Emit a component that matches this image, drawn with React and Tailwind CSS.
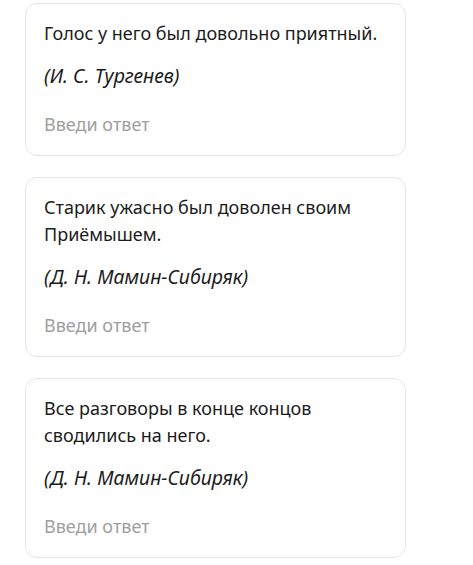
const tasks = [
  { text: "Голос у него был довольно приятный.", author: "(И. С. Тургенев)" },
  { text: "Старик ужасно был доволен своим Приёмышем.", author: "(Д. Н. Мамин-Сибиряк)" },
  { text: "Все разговоры в конце концов сводились на него.", author: "(Д. Н. Мамин-Сибиряк)" },
];

export default function App() {
  return (
    <div
      className="min-h-[565px] bg-white pl-[25px] pt-[3px] flex flex-col gap-[21px]"
      style={{ fontFamily: '"Noto Sans", "Open Sans", sans-serif' }}
    >
      {tasks.map((t, i) => (
        <div
          key={i}
          className="w-[381px] rounded-[12px] border border-[#e6e6e6] bg-white px-[18px] pt-[16px] pb-[17px]"
        >
          <p className="text-[18px] leading-[27px] text-[#1c1c1c]">{t.text}</p>
          <p className="mt-[15px] text-[19.5px] leading-[27px] italic text-[#1c1c1c]">{t.author}</p>
          <input
            className="mt-[22px] block w-full text-[18px] leading-[27px] h-[27px] outline-none placeholder:text-[#9e9e9e] bg-transparent"
            placeholder="Введи ответ"
          />
        </div>
      ))}
    </div>
  );
}
